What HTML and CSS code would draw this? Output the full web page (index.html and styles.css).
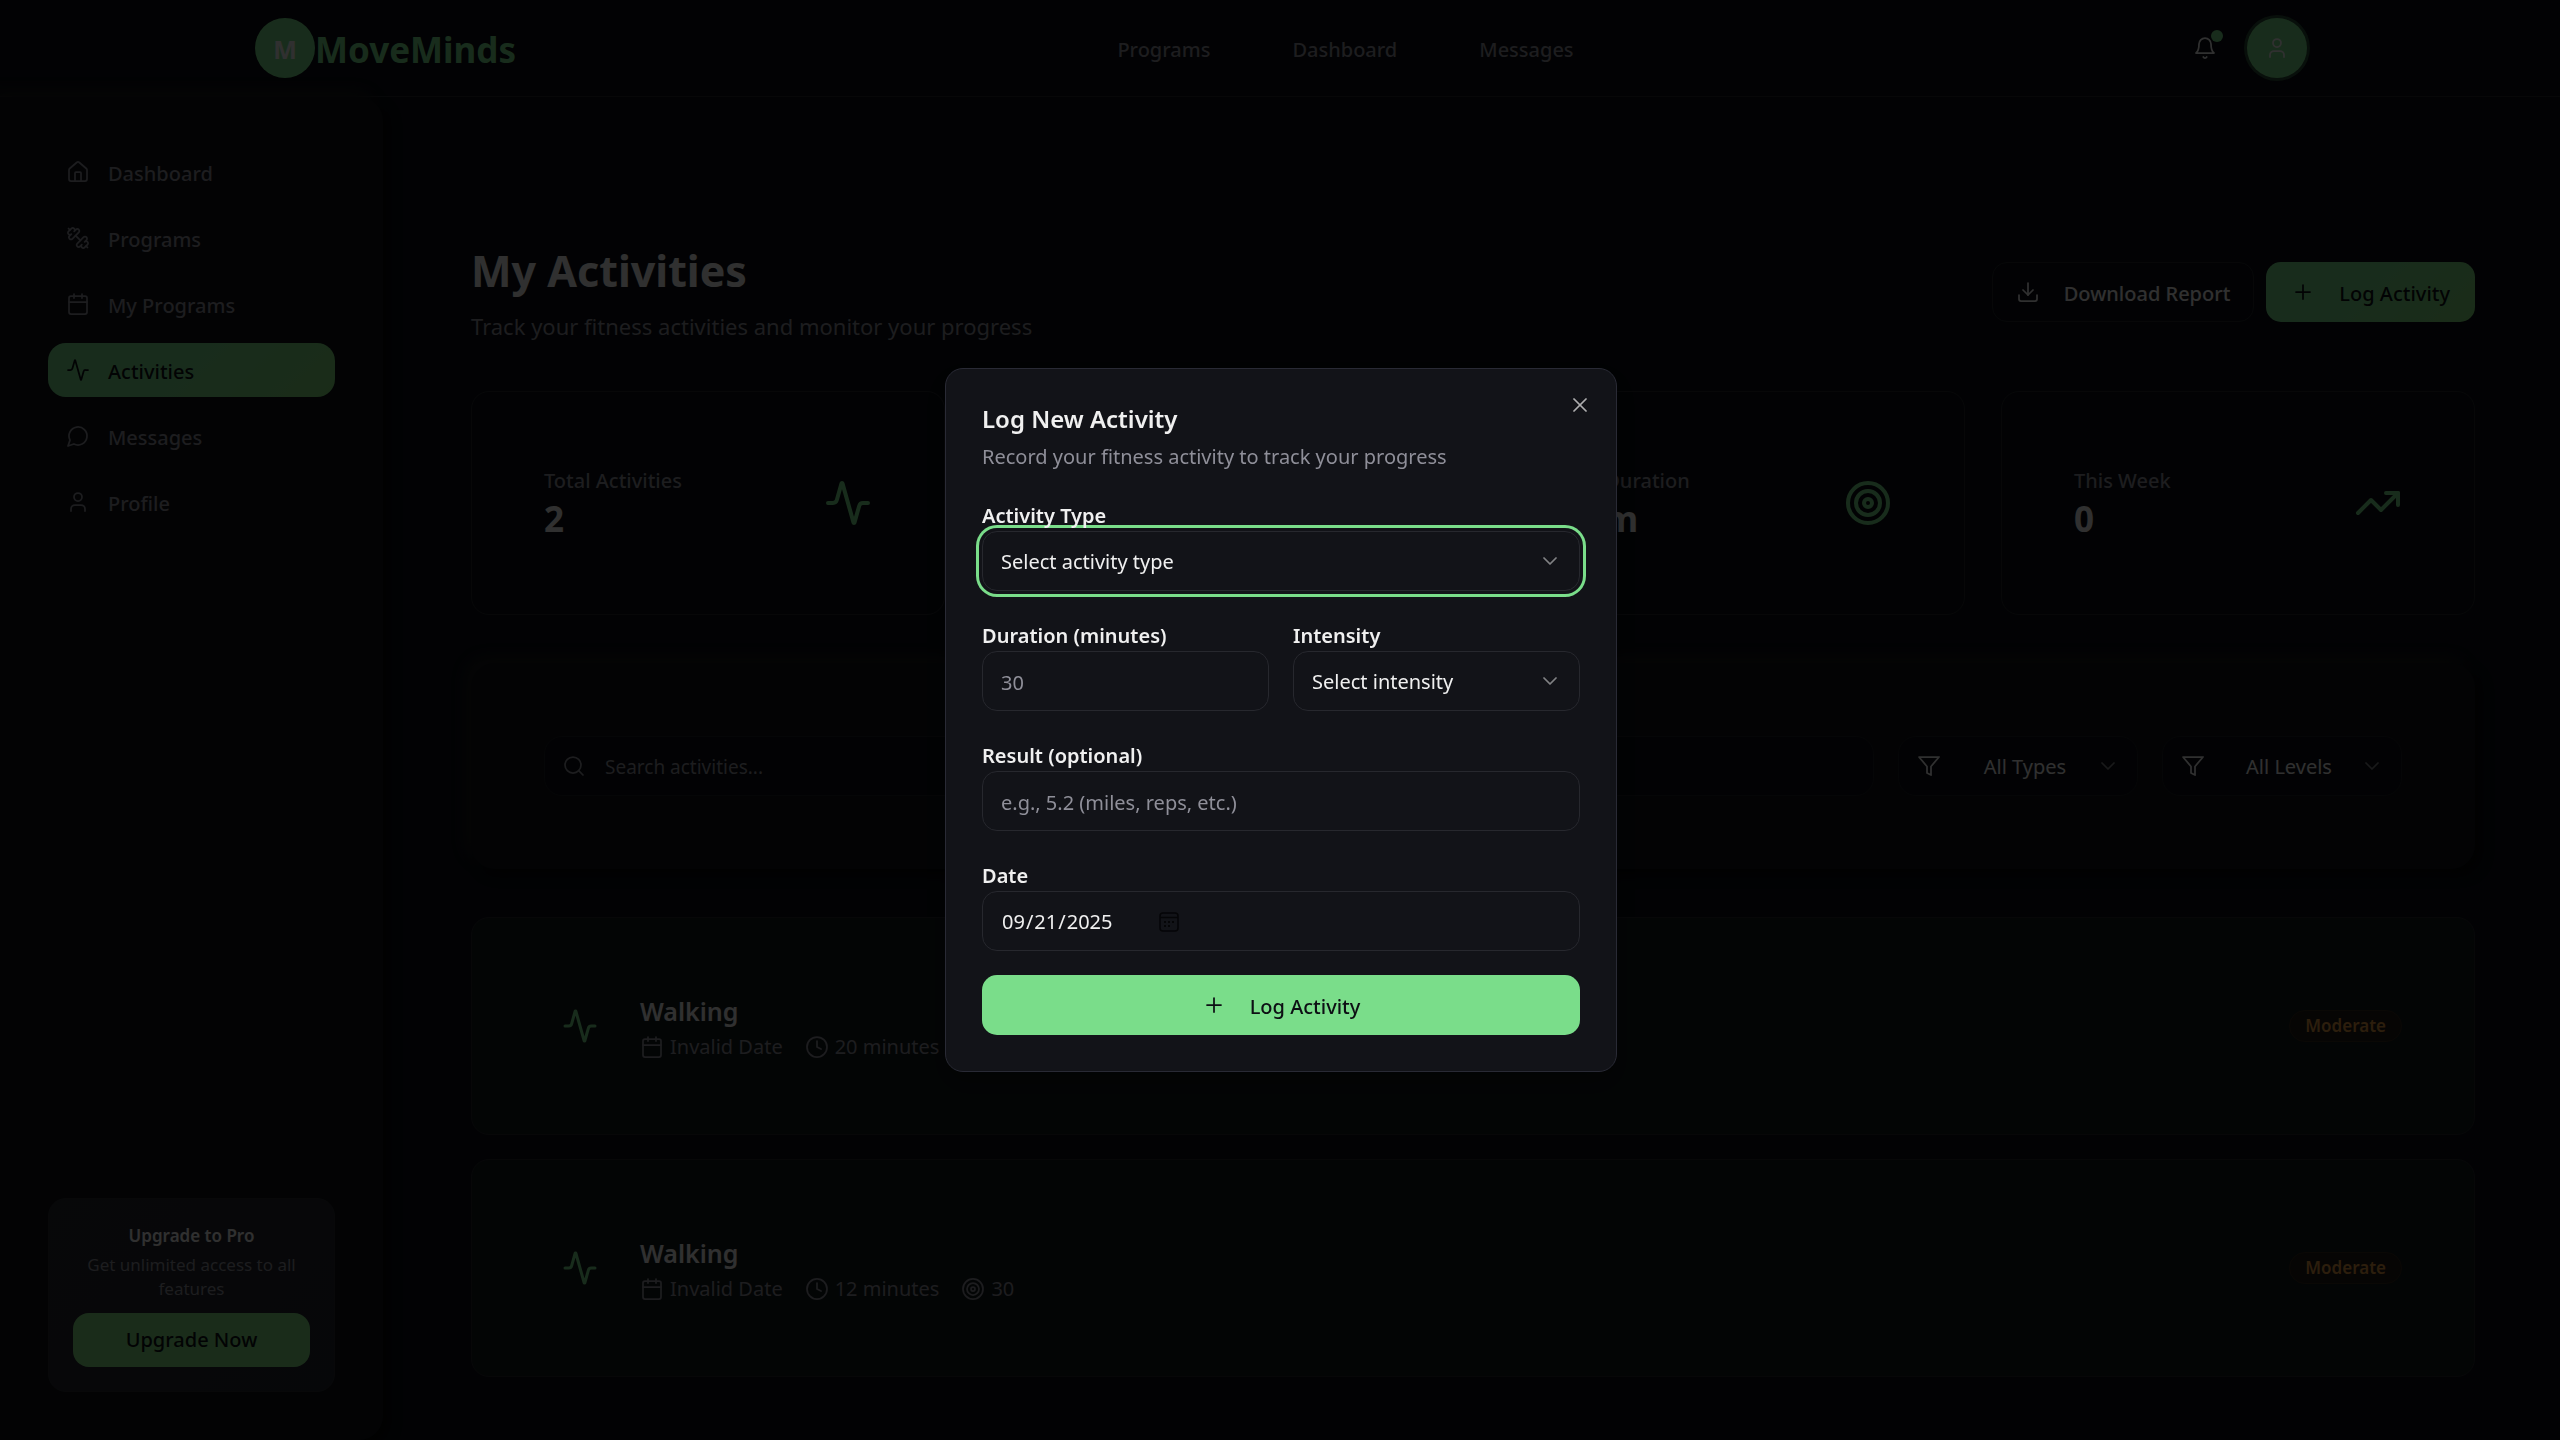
FILE: index.html
```
<!DOCTYPE html>
<html lang="en-US">
<head>
<meta charset="utf-8">
<meta name="viewport" content="width=device-width, initial-scale=1">
<title>MoveMinds – My Activities</title>
<link rel="stylesheet" href="styles.css">
</head>
<body>
<svg class="sprite" aria-hidden="true">
  <symbol id="i-home" viewBox="0 0 24 24"><path d="M15 21v-8a1 1 0 0 0-1-1h-4a1 1 0 0 0-1 1v8"/><path d="M3 10a2 2 0 0 1 .709-1.528l7-5.999a2 2 0 0 1 2.582 0l7 5.999A2 2 0 0 1 21 10v9a2 2 0 0 1-2 2H5a2 2 0 0 1-2-2z"/></symbol>
  <symbol id="i-dumbbell" viewBox="0 0 24 24"><path d="M14.4 14.4 9.6 9.6"/><path d="M18.657 21.485a2 2 0 1 1-2.829-2.828l-1.767 1.768a2 2 0 1 1-2.829-2.829l6.364-6.364a2 2 0 1 1 2.829 2.829l-1.768 1.767a2 2 0 1 1 2.828 2.829z"/><path d="m21.5 21.5-1.4-1.4"/><path d="M3.9 3.9 2.5 2.5"/><path d="M6.404 12.768a2 2 0 1 1-2.829-2.829l1.768-1.767a2 2 0 1 1-2.828-2.829l2.828-2.828a2 2 0 1 1 2.829 2.828l1.767-1.768a2 2 0 1 1 2.829 2.829z"/></symbol>
  <symbol id="i-calendar" viewBox="0 0 24 24"><path d="M8 2v4"/><path d="M16 2v4"/><rect width="18" height="18" x="3" y="4" rx="2"/><path d="M3 10h18"/></symbol>
  <symbol id="i-activity" viewBox="0 0 24 24"><path d="M22 12h-2.48a2 2 0 0 0-1.93 1.46l-2.35 8.36a.25.25 0 0 1-.48 0L9.24 2.18a.25.25 0 0 0-.48 0l-2.35 8.36A2 2 0 0 1 4.49 12H2"/></symbol>
  <symbol id="i-message" viewBox="0 0 24 24"><path d="M7.9 20A9 9 0 1 0 4 16.1L2 22Z"/></symbol>
  <symbol id="i-user" viewBox="0 0 24 24"><path d="M19 21v-2a4 4 0 0 0-4-4H9a4 4 0 0 0-4 4v2"/><circle cx="12" cy="7" r="4"/></symbol>
  <symbol id="i-bell" viewBox="0 0 24 24"><path d="M6 8a6 6 0 0 1 12 0c0 7 3 9 3 9H3s3-2 3-9"/><path d="M10.3 21a1.94 1.94 0 0 0 3.4 0"/></symbol>
  <symbol id="i-download" viewBox="0 0 24 24"><path d="M12 15V3"/><path d="M21 15v4a2 2 0 0 1-2 2H5a2 2 0 0 1-2-2v-4"/><path d="m7 10 5 5 5-5"/></symbol>
  <symbol id="i-plus" viewBox="0 0 24 24"><path d="M5 12h14"/><path d="M12 5v14"/></symbol>
  <symbol id="i-clock" viewBox="0 0 24 24"><circle cx="12" cy="12" r="10"/><path d="M12 6v6l4 2"/></symbol>
  <symbol id="i-target" viewBox="0 0 24 24"><circle cx="12" cy="12" r="10"/><circle cx="12" cy="12" r="6"/><circle cx="12" cy="12" r="2"/></symbol>
  <symbol id="i-trend" viewBox="0 0 24 24"><path d="m22 7-8.500 8.500-5-5L2 17"/><path d="M16 7h6v6"/></symbol>
  <symbol id="i-search" viewBox="0 0 24 24"><circle cx="11" cy="11" r="8"/><path d="m21 21-4.300-4.300"/></symbol>
  <symbol id="i-filter" viewBox="0 0 24 24"><path d="M22 3H2l8 9.460V19l4 2v-8.540z"/></symbol>
  <symbol id="i-chevron" viewBox="0 0 24 24"><path d="m6 9 6 6 6-6"/></symbol>
  <symbol id="i-close" viewBox="0 0 24 24"><path d="M18 6 6 18"/><path d="m6 6 12 12"/></symbol>
</svg>

<header class="topbar">
  <div class="topbar-inner">
    <a class="brand" href="#"><span class="brand-mark">M</span><span class="brand-name">MoveMinds</span></a>
    <nav class="topnav" aria-label="Main">
      <a href="#">Programs</a>
      <a href="#">Dashboard</a>
      <a href="#">Messages</a>
    </nav>
    <div class="topbar-actions">
      <button class="bell" type="button" aria-label="Notifications"><svg class="icon"><use href="#i-bell"/></svg><span class="bell-dot"></span></button>
      <button class="avatar" type="button" aria-label="Account"><svg class="icon"><use href="#i-user"/></svg></button>
    </div>
  </div>
</header>

<div class="shell">
  <aside class="sidebar">
    <nav class="sidenav" aria-label="Sections">
      <a href="#"><svg class="icon"><use href="#i-home"/></svg><span>Dashboard</span></a>
      <a href="#"><svg class="icon"><use href="#i-dumbbell"/></svg><span>Programs</span></a>
      <a href="#"><svg class="icon"><use href="#i-calendar"/></svg><span>My Programs</span></a>
      <a class="active" href="#" aria-current="page"><svg class="icon"><use href="#i-activity"/></svg><span>Activities</span></a>
      <a href="#"><svg class="icon"><use href="#i-message"/></svg><span>Messages</span></a>
      <a href="#"><svg class="icon"><use href="#i-user"/></svg><span>Profile</span></a>
    </nav>
    <section class="upgrade">
      <h2>Upgrade to Pro</h2>
      <p>Get unlimited access to all features</p>
      <button type="button">Upgrade Now</button>
    </section>
  </aside>

  <main class="main">
    <div class="page-head">
      <div>
        <h1>My Activities</h1>
        <p>Track your fitness activities and monitor your progress</p>
      </div>
      <div class="page-actions">
        <button class="btn btn-outline" type="button"><svg class="icon"><use href="#i-download"/></svg><span>Download Report</span></button>
        <button class="btn btn-gradient" type="button"><svg class="icon"><use href="#i-plus"/></svg><span>Log Activity</span></button>
      </div>
    </div>

    <section class="stats" aria-label="Summary">
      <div class="stat"><div><p class="stat-label">Total Activities</p><p class="stat-value">2</p></div><svg class="icon"><use href="#i-activity"/></svg></div>
      <div class="stat"><svg class="icon"><use href="#i-clock"/></svg></div>
      <div class="stat"><div><p class="stat-label">Avg Duration</p><p class="stat-value">16m</p></div><svg class="icon"><use href="#i-target"/></svg></div>
      <div class="stat"><div><p class="stat-label">This Week</p><p class="stat-value">0</p></div><svg class="icon"><use href="#i-trend"/></svg></div>
    </section>

    <section class="filters" aria-label="Filters">
      <div class="search"><svg class="icon"><use href="#i-search"/></svg><input type="search" aria-label="Search activities" placeholder="Search activities..."></div>
      <div class="filter"><svg class="icon"><use href="#i-filter"/></svg><select aria-label="Type"><option>All Types</option></select><svg class="icon chevron"><use href="#i-chevron"/></svg></div>
      <div class="filter"><svg class="icon"><use href="#i-filter"/></svg><select aria-label="Level"><option>All Levels</option></select><svg class="icon chevron"><use href="#i-chevron"/></svg></div>
    </section>

    <ul class="activities">
      <li class="activity">
        <span class="activity-icon"><svg class="icon"><use href="#i-activity"/></svg></span>
        <div class="activity-body">
          <h3>Walking</h3>
          <div class="meta">
            <span><svg class="icon"><use href="#i-calendar"/></svg>Invalid Date</span>
            <span><svg class="icon"><use href="#i-clock"/></svg>20 minutes</span>
          </div>
        </div>
        <span class="badge">Moderate</span>
      </li>
      <li class="activity">
        <span class="activity-icon"><svg class="icon"><use href="#i-activity"/></svg></span>
        <div class="activity-body">
          <h3>Walking</h3>
          <div class="meta">
            <span><svg class="icon"><use href="#i-calendar"/></svg>Invalid Date</span>
            <span><svg class="icon"><use href="#i-clock"/></svg>12 minutes</span>
            <span><svg class="icon"><use href="#i-target"/></svg>30</span>
          </div>
        </div>
        <span class="badge">Moderate</span>
      </li>
    </ul>
  </main>
</div>

<div class="overlay">
  <section class="dialog" role="dialog" aria-modal="true" aria-labelledby="dlg-title">
    <button class="dialog-close" type="button" aria-label="Close"><svg class="icon"><use href="#i-close"/></svg></button>
    <header class="dialog-head">
      <h2 id="dlg-title">Log New Activity</h2>
      <p>Record your fitness activity to track your progress</p>
    </header>
    <form class="form">
      <div class="field">
        <label for="f-type">Activity Type</label>
        <div class="select-wrap"><select class="control control-focus" id="f-type"><option>Select activity type</option></select><svg class="icon chevron"><use href="#i-chevron"/></svg></div>
      </div>
      <div class="field-row">
        <div class="field">
          <label for="f-duration">Duration (minutes)</label>
          <input class="control" id="f-duration" type="text" inputmode="numeric" placeholder="30">
        </div>
        <div class="field">
          <label for="f-intensity">Intensity</label>
          <div class="select-wrap"><select class="control" id="f-intensity"><option>Select intensity</option></select><svg class="icon chevron"><use href="#i-chevron"/></svg></div>
        </div>
      </div>
      <div class="field">
        <label for="f-result">Result (optional)</label>
        <input class="control" id="f-result" type="text" placeholder="e.g., 5.2 (miles, reps, etc.)">
      </div>
      <div class="field">
        <label for="f-date">Date</label>
        <input class="control control-date" id="f-date" type="date" value="2025-09-21">
      </div>
      <button class="btn btn-primary" type="submit"><svg class="icon"><use href="#i-plus"/></svg><span>Log Activity</span></button>
    </form>
  </section>
</div>
</body>
</html>
```
FILE: styles.css
```
:root {
  --bg: #0a0d14;
  --card: #0f1218;
  --activity: #131a1d;
  --popup: #121318;
  --fg: #f0f0f0;
  --muted: #8f8f99;
  --border: #24262c;
  --primary: #7add8a;
  --ink: #0d0f14;
}

*, *::before, *::after { box-sizing: border-box; }

body {
  margin: 0;
  background: var(--bg);
  color: var(--fg);
  font-family: "Noto Sans", "Segoe UI", sans-serif;
  font-size: 20px;
  line-height: 30px;
}

h1, h2, h3, p, ul { margin: 0; padding: 0; }
ul { list-style: none; }
a { color: inherit; text-decoration: none; }
button, input, select { font: inherit; color: inherit; }
button { border: 0; padding: 0; background: none; }

.sprite { position: absolute; width: 0; height: 0; }

.icon {
  display: block;
  flex: none;
  width: 24px;
  height: 24px;
  fill: none;
  stroke: currentColor;
  stroke-width: 1.75;
  stroke-linecap: round;
  stroke-linejoin: round;
}

/* Top bar */
.topbar { padding-left: 2px; border-bottom: 1px solid var(--border); }
.topbar-inner {
  display: flex;
  align-items: center;
  justify-content: space-between;
  max-width: 2052px;
  height: 96px;
  margin: 0 auto;
}
.brand { display: flex; align-items: center; color: var(--primary); }
.brand-mark {
  display: grid;
  place-items: center;
  width: 60px;
  height: 60px;
  padding-top: 2px;
  border-radius: 50%;
  background: var(--primary);
  color: var(--fg);
  font-size: 25px;
  font-weight: 700;
}
.brand-name { padding-top: 3px; font-size: 35px; font-weight: 700; line-height: 54px; }
.topnav { display: flex; gap: 82px; padding-top: 3px; color: var(--muted); font-weight: 500; }
.topbar-actions { display: flex; align-items: center; gap: 12px; }
.bell { position: relative; display: grid; place-items: center; width: 60px; height: 60px; }
.bell-dot {
  position: absolute;
  top: 12px;
  right: 12px;
  width: 12px;
  height: 12px;
  border-radius: 50%;
  background: var(--primary);
}
.avatar {
  display: grid;
  place-items: center;
  width: 60px;
  height: 60px;
  border-radius: 50%;
  background: var(--primary);
  box-shadow: 0 0 0 3px rgba(122, 221, 138, .3);
}

/* Shell */
.shell { display: flex; align-items: flex-start; }

.sidebar {
  position: sticky;
  top: 0;
  display: flex;
  flex: none;
  flex-direction: column;
  justify-content: space-between;
  width: 383px;
  height: calc(100vh - 97px);
  padding: 48px;
  border-radius: 0 24px 24px 0;
  background: var(--card);
  box-shadow: 6px 6px 12px #050506, -6px -6px 12px #1b1b1d;
}
.sidenav { display: flex; flex-direction: column; gap: 12px; }
.sidenav a {
  display: flex;
  align-items: center;
  gap: 18px;
  height: 54px;
  padding: 0 18px;
  border-radius: 18px;
  color: var(--muted);
  font-weight: 500;
}
.sidenav .active,
.btn-gradient {
  background: linear-gradient(135deg, #7add8e 40%, #82dd7a);
  color: var(--ink);
}
.sidenav span, .btn span { padding-top: 3px; }

.upgrade {
  padding: 24px;
  border: 1px solid #2a2c31;
  border-radius: 18px;
  background: linear-gradient(135deg, #25282d, #222530);
  text-align: center;
}
.upgrade h2 { font-size: 17px; font-weight: 600; line-height: 26px; }
.upgrade p { margin: 4px 0 12px; color: var(--muted); font-size: 17px; line-height: 24px; }
.upgrade button {
  width: 100%;
  height: 54px;
  border-radius: 16px;
  background: #82dc82;
  color: var(--ink);
  font-weight: 500;
}

/* Main column */
.main { flex: 1; min-width: 0; padding: 147px 85px 64px 88px; }

.page-head { display: flex; align-items: center; justify-content: space-between; margin-bottom: 47px; }
.page-head h1 { margin-bottom: 10px; font-size: 43px; font-weight: 700; line-height: 54px; }
.page-head p { color: var(--muted); font-size: 22px; line-height: 36px; }
.page-actions { display: flex; gap: 12px; padding-bottom: 4px; }

.btn {
  display: flex;
  align-items: center;
  justify-content: center;
  gap: 24px;
  height: 60px;
  padding: 0 25px;
  border-radius: 15px;
  font-weight: 500;
}
.btn-outline { padding: 0 23px; border: 1px solid var(--border); }
.btn-primary { background: var(--primary); color: var(--ink); }

.stats { display: grid; grid-template-columns: repeat(4, 1fr); gap: 36px; margin-bottom: 48px; }
.stat {
  display: flex;
  align-items: center;
  justify-content: space-between;
  padding: 72px;
  border: 1px solid var(--border);
  border-radius: 18px;
}
.stat .icon { width: 48px; height: 48px; color: var(--primary); stroke-width: 2; }
.stat-label { padding-top: 2px; color: var(--muted); font-weight: 500; }
.stat-value { font-size: 35px; font-weight: 700; line-height: 46px; }

.filters {
  display: flex;
  gap: 24px;
  margin-bottom: 48px;
  padding: 73px;
  border-radius: 24px;
  background: var(--card);
  box-shadow: 6px 6px 12px #050506, -6px -6px 12px #1b1b1d;
}
.search, .filter, .select-wrap { display: grid; align-items: center; }
.search > *, .filter > *, .select-wrap > * { grid-area: 1 / 1; }
.search { flex: 1; }
.search .icon { margin-left: 18px; color: var(--muted); }
.search input, .filter select {
  width: 100%;
  height: 60px;
  border: 1px solid #1c1e23;
  border-radius: 18px;
  background: var(--bg);
  appearance: none;
}
.search input { padding: 2px 18px 0 60px; font-size: 19px; }
.filter { width: 240px; }
.filter .icon { margin-left: 19px; }
.filter select { padding: 2px 42px 0 56px; text-align-last: center; }
.search .icon, .filter .icon, .select-wrap .icon { z-index: 1; pointer-events: none; }
.filter .chevron, .select-wrap .chevron { justify-self: end; margin: 0 18px 0 0; opacity: .5; }

::placeholder { color: var(--muted); opacity: 1; }

.activities { display: grid; gap: 24px; }
.activity {
  display: flex;
  align-items: center;
  gap: 24px;
  padding: 72px;
  border: 1px solid var(--border);
  border-radius: 18px;
  background: var(--activity);
}
.activity-icon { display: grid; place-items: center; width: 72px; height: 72px; color: var(--primary); }
.activity-icon .icon { width: 36px; height: 36px; stroke-width: 2; }
.activity-body { flex: 1; }
.activity h3 { font-size: 25px; font-weight: 600; line-height: 42px; }
.meta { display: flex; gap: 22px; color: var(--muted); }
.meta span { display: flex; align-items: center; gap: 6px; }
.badge {
  padding: 0 15px;
  border: 1px solid #33291a;
  border-radius: 16px;
  background: #1f1b15;
  color: #dd9440;
  font-size: 17px;
  font-weight: 600;
}

/* Dialog */
.overlay {
  position: fixed;
  inset: 0;
  z-index: 10;
  display: grid;
  place-items: center;
  padding-left: 2px;
  background: rgba(0, 0, 0, .8);
}
.dialog {
  position: relative;
  width: 672px;
  max-width: 100%;
  padding: 36px;
  border: 1px solid #292a35;
  border-radius: 18px;
  background: var(--popup);
  box-shadow: 0 12px 24px rgba(0, 0, 0, .3);
}
.dialog-close { position: absolute; top: 24px; right: 24px; opacity: .7; }
.dialog-head { margin-bottom: 23px; }
.dialog-head h2 { margin-bottom: 10px; font-size: 24px; font-weight: 600; line-height: 27px; }
.dialog-head p { color: var(--muted); }
.form { display: grid; gap: 24px; }
.field-row { display: grid; grid-template-columns: 1fr 1fr; gap: 24px; }
.field label {
  position: relative;
  z-index: 1;
  display: block;
  padding-top: 6px;
  font-weight: 600;
  line-height: 30px;
  pointer-events: none;
}
.control {
  display: block;
  width: 100%;
  height: 60px;
  padding: 2px 18px 0;
  border: 1px solid #27282e;
  border-radius: 15px;
  outline: 0;
  background: var(--popup);
  appearance: none;
}
.control-date { display: flex; align-items: center; }
.control-date::-webkit-calendar-picker-indicator {
  width: 20px;
  height: 20px;
  margin-left: 6px;
  padding: 0;
  background: url("data:image/svg+xml,%3Csvg xmlns='http://www.w3.org/2000/svg' viewBox='0 0 20 20' fill='none' stroke='%23050507' stroke-width='1.5'%3E%3Crect x='1' y='1' width='18' height='18' rx='3'/%3E%3Cpath d='M1 5.500h18'/%3E%3Cpath d='M5 10h2m2 0h2m2 0h2M5 14h2m2 0h2' stroke-width='2'/%3E%3C/svg%3E") center / contain no-repeat;
}
.control-focus { box-shadow: 0 0 0 3px var(--popup), 0 0 0 6px var(--primary); }
```
